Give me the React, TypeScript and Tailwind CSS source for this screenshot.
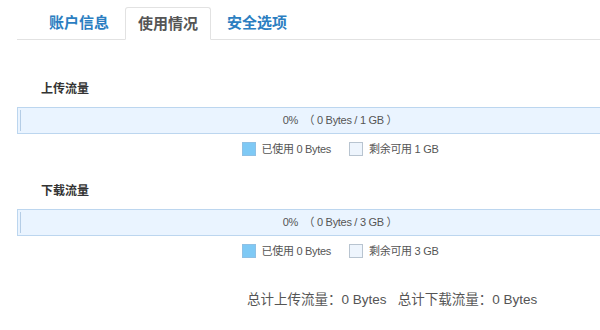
import React from 'react';

const font = { fontFamily: '"Liberation Sans", "Noto Sans CJK SC", sans-serif' };

type Usage = { title: string; total: string };

const usages: Usage[] = [
  { title: '上传流量', total: '1 GB' },
  { title: '下载流量', total: '3 GB' },
];

function UsageBlock({ title, total }: Usage) {
  return (
    <div>
      <div className="pl-[24px] text-[12px] font-bold leading-[14px] text-[#333]">{title}</div>
      <div className="relative mt-[11px] h-[27px] w-[646px] border border-[#bcd6ef] bg-[#eaf4ff]">
        <div className="absolute left-[2px] top-[2px] bottom-[2px] w-px bg-[#b5cde6]" />
        <div className="flex h-full items-center justify-center text-[11px] tracking-[-0.3px] text-[#555]">
          0%&nbsp;&nbsp;（ 0 Bytes / {total} ）
        </div>
      </div>
      <div className="mt-[7px] flex w-[646px] items-center justify-center text-[11px] tracking-[-0.3px] text-[#555]">
        <span className="mr-[6px] h-[14px] w-[14px] border border-[#8fc0e4] bg-[#7ec9f5]" />
        <span className="mr-[18px]">已使用 0 Bytes</span>
        <span className="mr-[6px] h-[14px] w-[14px] border border-[#b8c4d0] bg-[#eef5fd]" />
        <span>剩余可用 {total}</span>
      </div>
    </div>
  );
}

export default function App() {
  return (
    <div className="h-[330px] w-[600px] overflow-hidden bg-white" style={font}>
      {/* Tabs */}
      <div className="ml-[17px] flex gap-[3px] border-b border-[#e2e2e2] pt-[7px]">
        <div className="ml-[19px] px-[13px] text-[15px] font-bold leading-[31px] text-[#2b7ec1]">账户信息</div>
        <div className="-mb-px rounded-t-[3px] border border-b-white border-[#e2e2e2] bg-white px-[12px] text-[15px] font-bold leading-[31px] text-[#555]">
          使用情况
        </div>
        <div className="px-[13px] text-[15px] font-bold leading-[31px] text-[#2b7ec1]">安全选项</div>
      </div>

      <div className="ml-[17px] pt-[42px]">
        <UsageBlock {...usages[0]} />
        <div className="h-[26px]" />
        <UsageBlock {...usages[1]} />
        <div className="mt-[31px] pl-[230px] text-[13.5px] text-[#555]">
          总计上传流量：0 Bytes&nbsp;&nbsp;&nbsp;总计下载流量：0 Bytes
        </div>
      </div>
    </div>
  );
}
